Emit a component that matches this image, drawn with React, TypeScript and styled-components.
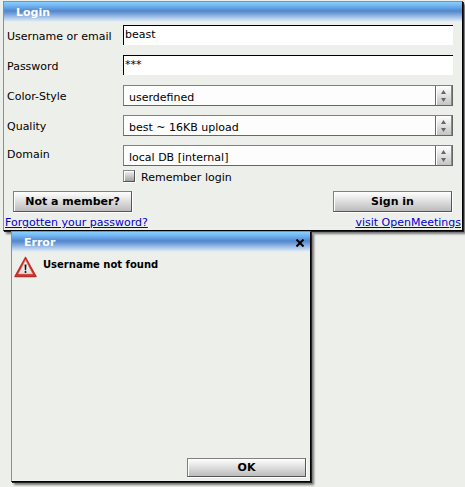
import React from "react";
import styled, { createGlobalStyle } from "styled-components";

const GlobalStyle = createGlobalStyle`
  *, *::before, *::after { box-sizing: border-box; }
  body {
    margin: 0;
    background: #edefea;
    color: #000;
    font: 11px/14px "DejaVu Sans", Verdana, sans-serif;
  }
`;

const Desktop = styled.main`
  display: flex;
  flex-direction: column;
  padding: 1px 2px 5px 3px;
`;

const WindowFrame = styled.section<{ $compact?: boolean }>`
  display: flex;
  flex-direction: column;
  width: ${(p) => (p.$compact ? "300px" : "auto")};
  max-width: 100%;
  min-height: ${(p) => (p.$compact ? "251px" : "0")};
  margin-left: ${(p) => (p.$compact ? "8px" : "0")};
  background: #edefea;
  border: 1px solid #000;
  border-top-color: #6095e0;
  border-left-color: #6095e0;
  box-shadow: 1px 1px 0 #222, 3px 3px 2px #777;
`;

const TitleBar = styled.header`
  display: flex;
  align-items: center;
  justify-content: space-between;
  height: 20px;
  padding: 0 6px 0 12px;
  background: linear-gradient(#86d0ff 0, #70b2f0 4px, #5286cc 9px, #76a2db 12px, #d8e8f6 19px, #edefea 20px);
`;

const Title = styled.h1`
  margin: 0;
  padding-top: 2px;
  color: #fff;
  font-size: 11px;
  line-height: 18px;
`;

const CloseButton = styled.button`
  display: flex;
  padding: 2px 0 0;
  border: 0;
  background: none;
`;

const Form = styled.form`
  display: flex;
  flex-direction: column;
`;

const Fields = styled.div`
  display: grid;
  grid-template-columns: 116px minmax(0, 1fr);
  row-gap: 9px;
  padding: 3px 9px 0 3px;
`;

const FieldLabel = styled.label<{ $raised?: boolean }>`
  padding-top: ${(p) => (p.$raised ? "3px" : "5px")};
  font-size: 11px;
  line-height: 14px;
  white-space: nowrap;
`;

const TextInput = styled.input`
  width: 100%;
  height: 20px;
  margin-bottom: 1px;
  padding: 0 1px 3px;
  border: 0 solid #000;
  border-width: 1px 0 0 1px;
  border-radius: 0;
  outline: 0;
  background: #fff;
  color: #000;
  font: inherit;
`;

const SelectBox = styled.div`
  display: grid;
  grid-template-columns: minmax(0, 1fr) 17px;
  height: 21px;
  border: 1px solid #666;
  border-top-color: #808080;
  border-left-color: #808080;
  background: #fdfdfd;
`;

const Select = styled.select`
  grid-area: 1 / 1 / 2 / 3;
  width: 100%;
  padding: 4px 20px 0 5px;
  border: 0;
  outline: 0;
  appearance: none;
  background: transparent;
  color: #000;
  font: inherit;
`;

const Stepper = styled.span`
  grid-area: 1 / 2;
  display: flex;
  align-items: center;
  justify-content: center;
  border-left: 1px solid #666;
  border-right: 1px solid #888;
  background: linear-gradient(#fff, #c4c4c4);
  box-shadow: inset 1px 0 #fff;
  pointer-events: none;
`;

const Remember = styled.label`
  display: flex;
  align-items: center;
  gap: 6px;
  height: 18px;
  padding: 5px 0 0 119px;
`;

const Checkbox = styled.input`
  width: 12px;
  height: 12px;
  margin: 0 0 3px;
  appearance: none;
  border: 1px solid #555;
  border-top-color: #888;
  border-left-color: #888;
  background: linear-gradient(#f4f4f4, #a2a2a2);
  box-shadow: inset 1px 1px #fff, 1px 1px #fff;
  &:checked { background: #666; }
`;

const Actions = styled.div`
  display: flex;
  justify-content: space-between;
  padding: 7px 10px 0 9px;
`;

const Button = styled.button<{ $short?: boolean }>`
  width: 119px;
  height: ${(p) => (p.$short ? "19px" : "21px")};
  padding: 0;
  border: 1px solid #555;
  border-top-color: #808080;
  border-left-color: #808080;
  border-radius: 0;
  background: linear-gradient(#fff, #bcbcbc);
  box-shadow: inset 1px 0 #fff, 1px 1px #fff;
  color: #000;
  font: bold 11px/14px "DejaVu Sans", Verdana, sans-serif;
`;

const Links = styled.nav`
  display: flex;
  justify-content: space-between;
  padding: 4px 1px 0;
`;

const Link = styled.a`
  color: #0000cc;
  line-height: 14px;
  text-decoration: underline;
`;

const Message = styled.div`
  display: flex;
  align-items: flex-start;
  gap: 6px;
  padding: 4px 2px;
`;

const MessageText = styled.p`
  margin: 2px 0 0;
  font-size: 10px;
  font-weight: bold;
  line-height: 14px;
`;

const Footer = styled.footer`
  display: flex;
  justify-content: flex-end;
  margin-top: auto;
  padding: 0 4px 4px;
`;

const StepArrows = () => (
  <Stepper aria-hidden="true">
    <svg width="5" height="12" viewBox="0 0 5 12" fill="#666">
      <path d="M2.5 0 5 4H0zM0 8h5l-2.500 4z" />
    </svg>
  </Stepper>
);

const WarningIcon = () => (
  <svg width="23" height="22" viewBox="0 0 23 22" aria-hidden="true">
    <defs>
      <linearGradient id="warning-red" x2="0" y2="1">
        <stop stopColor="#ed765f" />
        <stop offset=".55" stopColor="#cf2620" />
        <stop offset="1" stopColor="#d33a35" />
      </linearGradient>
      <linearGradient id="warning-face" x2="0" y2="1">
        <stop stopColor="#fff" />
        <stop offset="1" stopColor="#ddd" />
      </linearGradient>
    </defs>
    <path d="M11.500 1.500 22 20.500H1z" fill="url(#warning-red)" stroke="#b9302b" strokeLinejoin="round" strokeWidth="1.500" />
    <path d="m11.500 4.500 7.200 13.400H4.300z" fill="url(#warning-face)" stroke="#f0a099" strokeWidth=".5" />
    <path d="M10.500 8.500h2l-.4 5.700h-1.200z" fill="#111" />
    <circle cx="11.500" cy="16" r="1" fill="#111" />
  </svg>
);

interface ChoiceProps {
  id: string;
  label: string;
  value: string;
  raised?: boolean;
}

const Choice = ({ id, label, value, raised }: ChoiceProps) => (
  <>
    <FieldLabel htmlFor={id} $raised={raised}>{label}</FieldLabel>
    <SelectBox>
      <Select id={id} defaultValue={value}>
        <option>{value}</option>
      </Select>
      <StepArrows />
    </SelectBox>
  </>
);

export default function App() {
  return (
    <>
      <GlobalStyle />
      <Desktop>
        <WindowFrame aria-labelledby="login-title">
          <TitleBar><Title id="login-title">Login</Title></TitleBar>
          <Form onSubmit={(event) => event.preventDefault()}>
            <Fields>
              <FieldLabel htmlFor="username">Username or email</FieldLabel>
              <TextInput id="username" defaultValue="beast" />
              <FieldLabel htmlFor="password">Password</FieldLabel>
              <TextInput id="password" defaultValue="***" />
              <Choice id="color-style" label="Color-Style" value="userdefined" />
              <Choice id="quality" label="Quality" value="best ~ 16KB upload" />
              <Choice id="domain" label="Domain" value="local DB [internal]" raised />
            </Fields>
            <Remember>
              <Checkbox type="checkbox" />
              Remember login
            </Remember>
            <Actions>
              <Button type="button">Not a member?</Button>
              <Button type="submit">Sign in</Button>
            </Actions>
            <Links>
              <Link href="#password">Forgotten your password?</Link>
              <Link href="#openmeetings">visit OpenMeetings</Link>
            </Links>
          </Form>
        </WindowFrame>
        <WindowFrame $compact role="alertdialog" aria-labelledby="error-title">
          <TitleBar>
            <Title id="error-title">Error</Title>
            <CloseButton type="button" aria-label="Close">
              <svg width="8" height="8" viewBox="0 0 8 8" fill="none" stroke="#000" strokeWidth="2">
                <path d="m.5.5 7 7m0-7-7 7" />
              </svg>
            </CloseButton>
          </TitleBar>
          <Message>
            <WarningIcon />
            <MessageText>Username not found</MessageText>
          </Message>
          <Footer><Button $short type="button">OK</Button></Footer>
        </WindowFrame>
      </Desktop>
    </>
  );
}
